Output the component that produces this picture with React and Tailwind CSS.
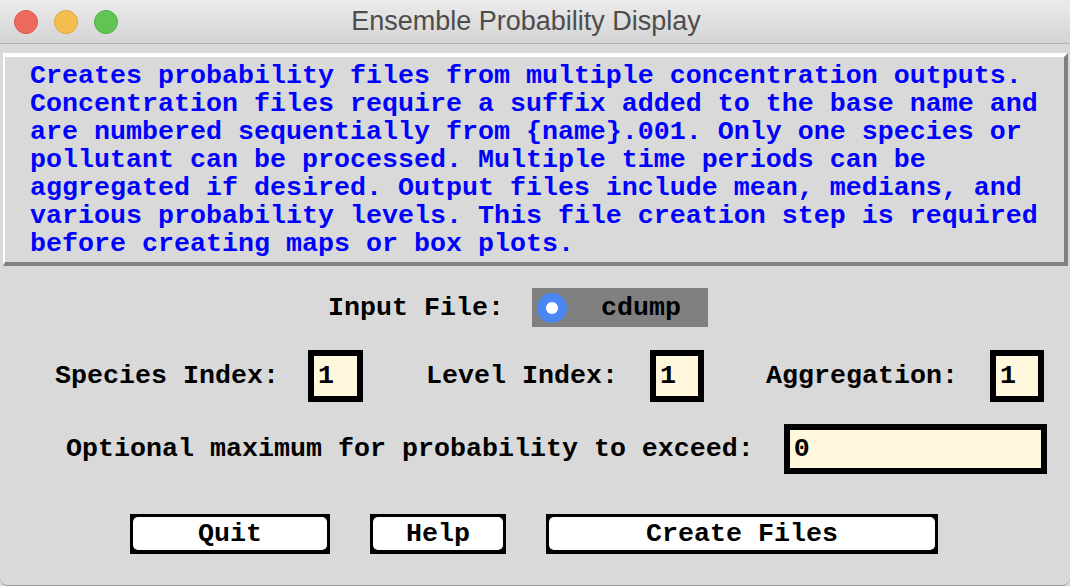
import React from "react";

const mono = { fontFamily: '"Liberation Mono", "Courier New", monospace' };

function Field({ value, w, h }) {
  return (
    <div
      className={`${w} ${h} border-[6px] border-black bg-[#fff8dc] flex items-center pl-[4px] text-black font-bold text-[26.67px] leading-[28px]`}
    >
      {value}
    </div>
  );
}

function Btn({ label, w }) {
  return (
    <div className={`${w} h-[40px] bg-black pt-[3px] pb-[4px] px-[3px]`}>
      <div className="w-full h-full bg-white rounded-[5px] flex items-center justify-center text-black font-bold text-[26.67px] leading-[28px]">
        {label}
      </div>
    </div>
  );
}

export default function App() {
  const lines = [
    "Creates probability files from multiple concentration outputs.",
    "Concentration files require a suffix added to the base name and",
    "are numbered sequentially from {name}.001. Only one species or",
    "pollutant can be processed. Multiple time periods can be",
    "aggregated if desired. Output files include mean, medians, and",
    "various probability levels. This file creation step is required",
    "before creating maps or box plots.",
  ];
  return (
    <div className="w-[1070px] h-[586px] overflow-hidden bg-[#d9d9d9] flex flex-col" style={mono}>
      {/* Title bar */}
      <div className="h-[44px] shrink-0 bg-gradient-to-b from-[#ebebeb] to-[#d4d4d4] border-b border-[#b1b1b1] flex items-center relative">
        <div className="flex items-center gap-[16px] pl-[14px]">
          <div className="w-[24px] h-[24px] rounded-full bg-[#ee6a5f] border border-[#d9574d]" />
          <div className="w-[24px] h-[24px] rounded-full bg-[#f5bf4f] border border-[#dca63c]" />
          <div className="w-[24px] h-[24px] rounded-full bg-[#61c554] border border-[#4fae43]" />
        </div>
        <div
          className="absolute left-0 right-0 top-0 h-[43px] flex items-center justify-center pr-[18px] text-[27px] text-[#4d4d4d] pointer-events-none"
          style={{ fontFamily: '"Liberation Sans", Arial, sans-serif' }}
        >
          Ensemble Probability Display
        </div>
      </div>

      {/* Body */}
      <div className="flex-1 flex flex-col border-b border-[#9a9a9a] rounded-b-[8px]">
        {/* Description box */}
        <div className="mt-[9px] ml-[3px] w-[1065px] h-[213px] border-t-4 border-l-2 border-b-4 border-r-4 border-t-white border-l-white border-b-[#808080] border-r-[#808080] bg-[#d9d9d9] pl-[25px] pt-[5px]">
          {lines.map((l, i) => (
            <div key={i} className="whitespace-pre text-[#0000ff] font-bold text-[26.67px] leading-[28px]">
              {l}
            </div>
          ))}
        </div>

        {/* Input file row */}
        <div className="mt-[22px] h-[39px] flex items-center pl-[328px]">
          <div className="text-black font-bold text-[26.67px] leading-[28px] whitespace-pre">Input File:</div>
          <div className="ml-[28px] w-[176px] h-[39px] bg-[#808080] flex items-center pl-[5px]">
            <div className="w-[30px] h-[30px] rounded-full bg-[#4b87f2] flex items-center justify-center">
              <div className="w-[12px] h-[12px] rounded-full bg-white" />
            </div>
            <div className="ml-[34px] text-black font-bold text-[26.67px] leading-[28px]">cdump</div>
          </div>
        </div>

        {/* Indices row */}
        <div className="mt-[23px] h-[52px] flex items-center pl-[55px]">
          <div className="text-black font-bold text-[26.67px] leading-[28px] whitespace-pre">Species Index:</div>
          <div className="ml-[29px]">
            <Field value="1" w="w-[55px]" h="h-[52px]" />
          </div>
          <div className="ml-[63px] text-black font-bold text-[26.67px] leading-[28px] whitespace-pre">Level Index:</div>
          <div className="ml-[32px]">
            <Field value="1" w="w-[54px]" h="h-[52px]" />
          </div>
          <div className="ml-[62px] text-black font-bold text-[26.67px] leading-[28px] whitespace-pre">Aggregation:</div>
          <div className="ml-[32px]">
            <Field value="1" w="w-[54px]" h="h-[52px]" />
          </div>
        </div>

        {/* Optional max row */}
        <div className="mt-[22px] h-[50px] flex items-center pl-[66px]">
          <div className="text-black font-bold text-[26.67px] leading-[28px] whitespace-pre">
            Optional maximum for probability to exceed:
          </div>
          <div className="ml-[30px]">
            <Field value="0" w="w-[263px]" h="h-[50px]" />
          </div>
        </div>

        {/* Buttons */}
        <div className="mt-[40px] flex items-center pl-[130px] gap-[40px]">
          <Btn label="Quit" w="w-[200px]" />
          <Btn label="Help" w="w-[136px]" />
          <Btn label="Create Files" w="w-[392px]" />
        </div>
      </div>
    </div>
  );
}
